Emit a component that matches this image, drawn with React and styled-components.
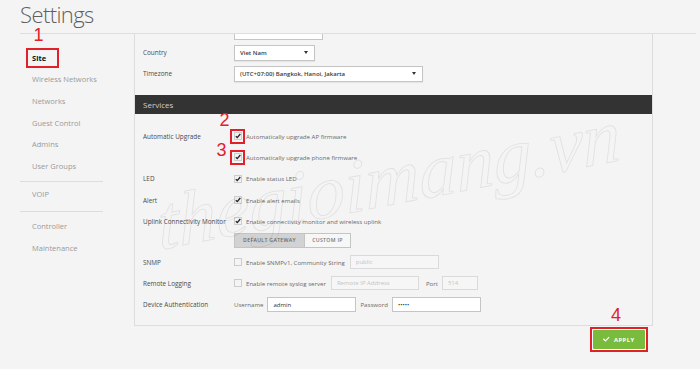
import React from "react";
import styled, { createGlobalStyle } from "styled-components";
import { FaCheck } from "react-icons/fa";

const Global = createGlobalStyle`
  html, body { margin: 0; padding: 0; background: #f4f4f4; }
  body { font-family: "Open Sans", "Liberation Sans", sans-serif; color: #555; }
  * { box-sizing: border-box; }
`;

const RED = "#e2202a";

const Page = styled.div`
  position: relative;
  width: 700px;
  height: 369px;
  overflow: hidden;
  padding: 0 4px 0 20px;
`;

const Title = styled.h1`
  margin: 0;
  height: 34px;
  border-bottom: 1px solid #dedede;
  font-size: 22px;
  font-weight: 300;
  letter-spacing: -0.6px;
  line-height: 28px;
  color: #5f5f5f;
`;

const Body = styled.div`
  display: grid;
  grid-template-columns: 114px 519px;
  align-items: start;
`;

const Sidebar = styled.nav`
  display: flex;
  flex-direction: column;
  padding-top: 13px;
`;

const NavItem = styled.div`
  height: 21.6px;
  display: flex;
  align-items: center;
  padding-left: 12px;
  font-size: 7.5px;
  color: ${(p) => (p.$active ? "#111" : "#9a9a9a")};
  font-weight: ${(p) => (p.$active ? 700 : 400)};
`;

const Separator = styled.div`
  width: 83px;
  height: 1px;
  background: #dcdcdc;
  margin: ${(p) => p.$m};
`;

const Mark = styled.span`
  position: relative;
  display: inline-flex;
  align-items: center;
  height: 20px;
  margin-left: -6px;
  padding: 0 11px 0 4px;
  border: 2px solid ${RED};
`;

const Badge = styled.span`
  position: absolute;
  left: ${(p) => p.$x}px;
  top: ${(p) => p.$y}px;
  font-family: "Liberation Sans", Arial, sans-serif;
  font-size: 18px;
  line-height: 1;
  font-weight: 400;
  color: ${RED};
`;

const Panel = styled.section`
  height: 292px;
  overflow: hidden;
  border: 1px solid #dcdcdc;
  border-top: none;
`;

const Form = styled.div`
  margin-top: -13px;
  display: flex;
  flex-direction: column;
`;

const Row = styled.div`
  display: grid;
  grid-template-columns: 91px 1fr;
  align-items: center;
  height: ${(p) => p.$h || 21.3}px;
  padding-left: 8px;
`;

const Label = styled.div`
  font-size: 6.4px;
  color: #4a4a4a;
  white-space: nowrap;
`;

const Controls = styled.div`
  display: flex;
  align-items: center;
  gap: ${(p) => p.$gap ?? 4}px;
  font-size: 6.1px;
  color: #6a6a6a;
  white-space: nowrap;
`;

const SectionBar = styled.div`
  height: 19px;
  margin: 11px 0 11.5px;
  background: #333;
  color: #cfcfcf;
  font-size: 8px;
  display: flex;
  align-items: center;
  padding-left: 8px;
`;

const Select = styled.div`
  width: ${(p) => p.$w}px;
  height: 16px;
  background: #fff;
  border: 1px solid #c5c5c5;
  box-shadow: 0 1px 1px rgba(0, 0, 0, 0.06);
  padding: 0 6px 0 5px;
  display: flex;
  align-items: center;
  justify-content: space-between;
  font-size: 6px;
  font-weight: 600;
  color: #3a3a3a;
`;

const Caret = () => (
  <svg width="4" height="3" viewBox="0 0 4 3">
    <path d="M0 0 H4 L2 3 Z" fill="#333" />
  </svg>
);

const TextInput = styled.input`
  width: ${(p) => p.$w}px;
  height: ${(p) => p.$h || 14}px;
  margin: 0 0 0 ${(p) => p.$ml || 0}px;
  padding: 0 5px;
  font-family: inherit;
  font-size: 6px;
  color: #333;
  background: ${(p) => (p.disabled ? "#f6f6f6" : "#fff")};
  border: 1px solid ${(p) => (p.disabled ? "#dadada" : "#c5c5c5")};
  border-radius: 0;
  outline: none;
  &::placeholder { color: #c4c4c4; }
`;

const InlineText = styled.span`
  margin: 0 4px 0 7px;
`;

const CheckSlot = styled.span`
  position: relative;
  width: 15px;
  height: 15px;
  margin-left: -4px;
  margin-right: 1px;
  display: inline-flex;
  align-items: center;
  justify-content: center;
  border: 2px solid ${(p) => (p.$marked ? RED : "transparent")};
`;

const Box = ({ checked }) => (
  <svg width="8" height="8" viewBox="0 0 8 8">
    <rect x="0.5" y="0.5" width="7" height="7" fill={checked ? "#f2f2f2" : "#f4f4f4"} stroke="#cdcdcd" />
    {checked && <path d="M1.8 4.2 L3.3 5.6 L6.3 2" fill="none" stroke="#2a2a2a" strokeWidth="1.4" />}
  </svg>
);

const Check = ({ checked, marked, badge }) => (
  <CheckSlot $marked={marked}>
    <Box checked={checked} />
    {badge}
  </CheckSlot>
);

const TabGroup = styled.div`
  display: flex;
  border: 1px solid #c4c4c4;
  margin: 1px 0 4.5px;
`;

const Tab = styled.div`
  width: ${(p) => p.$w}px;
  height: 13px;
  display: flex;
  align-items: center;
  justify-content: center;
  font-size: 5.2px;
  font-weight: 600;
  letter-spacing: 0.3px;
  text-transform: uppercase;
  color: ${(p) => (p.$active ? "#6a6a6a" : "#777")};
  background: ${(p) => (p.$active ? "#d2d2d2" : "#f7f7f7")};
  & + & { border-left: 1px solid #c4c4c4; }
`;

const Actions = styled.div`
  display: flex;
  justify-content: flex-end;
  padding: 1px 5px 0 0;
`;

const ApplyMark = styled.div`
  position: relative;
  border: 2px solid ${RED};
  padding: 1px;
  background: #fff;
`;

const ApplyButton = styled.button`
  width: 52px;
  height: 19px;
  border: none;
  border-radius: 1px;
  background: #79bc3d;
  color: #fff;
  font-family: inherit;
  font-size: 5.8px;
  font-weight: 700;
  letter-spacing: 0.5px;
  display: flex;
  align-items: center;
  justify-content: center;
  gap: 4px;
  padding: 0;
`;

const Watermark = styled.div`
  position: absolute;
  left: 160px;
  top: 186px;
  font-family: "Liberation Serif", serif;
  font-style: italic;
  font-weight: 400;
  font-size: 76px;
  line-height: 1;
  color: transparent;
  -webkit-text-stroke: 1px rgba(0, 0, 0, 0.075);
  transform: rotate(-11deg) skewX(-8deg);
  transform-origin: left bottom;
  pointer-events: none;
  white-space: nowrap;
`;

export default function App() {
  return (
    <Page>
      <Global />
      <Title>Settings</Title>
      <Body>
        <Sidebar>
          <NavItem $active>
            <Mark>
              Site
              <Badge $x={5.5} $y={-24}>1</Badge>
            </Mark>
          </NavItem>
          <NavItem>Wireless Networks</NavItem>
          <NavItem>Networks</NavItem>
          <NavItem>Guest Control</NavItem>
          <NavItem>Admins</NavItem>
          <NavItem>User Groups</NavItem>
          <Separator $m="4px 0 1.5px" />
          <NavItem>VOIP</NavItem>
          <Separator $m="6.5px 0 3px" />
          <NavItem>Controller</NavItem>
          <NavItem>Maintenance</NavItem>
        </Sidebar>

        <div>
          <Panel>
            <Form>
              <Row $h={21}>
                <Label>Site Name</Label>
                <Controls>
                  <TextInput $w={89} $h={16} readOnly value="Default" />
                </Controls>
              </Row>
              <Row $h={21}>
                <Label>Country</Label>
                <Controls>
                  <Select $w={81}>Viet Nam <Caret /></Select>
                </Controls>
              </Row>
              <Row $h={21}>
                <Label>Timezone</Label>
                <Controls>
                  <Select $w={189}>(UTC+07:00) Bangkok, Hanoi, Jakarta <Caret /></Select>
                </Controls>
              </Row>

              <SectionBar>Services</SectionBar>

              <Row>
                <Label>Automatic Upgrade</Label>
                <Controls $gap={0}>
                  <Check checked marked badge={<Badge $x={-12.5} $y={-20}>2</Badge>} />
                  Automatically upgrade AP firmware
                </Controls>
              </Row>
              <Row>
                <Label />
                <Controls $gap={0}>
                  <Check checked marked badge={<Badge $x={-15.5} $y={-11}>3</Badge>} />
                  Automatically upgrade phone firmware
                </Controls>
              </Row>
              <Row>
                <Label>LED</Label>
                <Controls $gap={0}>
                  <Check checked />
                  Enable status LED
                </Controls>
              </Row>
              <Row>
                <Label>Alert</Label>
                <Controls $gap={0}>
                  <Check checked />
                  Enable alert emails
                </Controls>
              </Row>
              <Row>
                <Label>Uplink Connectivity Monitor</Label>
                <Controls $gap={0}>
                  <Check checked />
                  Enable connectivity monitor and wireless uplink
                </Controls>
              </Row>
              <Row $h={19.5}>
                <Label />
                <Controls>
                  <TabGroup>
                    <Tab $w={69} $active>Default Gateway</Tab>
                    <Tab $w={46}>Custom IP</Tab>
                  </TabGroup>
                </Controls>
              </Row>
              <Row>
                <Label>SNMP</Label>
                <Controls $gap={0}>
                  <Check />
                  Enable SNMPv1, Community String
                  <TextInput $w={89} $ml={5} disabled placeholder="public" />
                </Controls>
              </Row>
              <Row>
                <Label>Remote Logging</Label>
                <Controls $gap={0}>
                  <Check />
                  Enable remote syslog server
                  <TextInput $w={88} $ml={5} disabled placeholder="Remote IP Address" />
                  <InlineText>Port</InlineText>
                  <TextInput $w={36} disabled placeholder="514" />
                </Controls>
              </Row>
              <Row>
                <Label>Device Authentication</Label>
                <Controls>
                  Username
                  <TextInput $w={89} $h={15} readOnly value="admin" />
                  Password
                  <TextInput $w={89} $h={15} type="password" readOnly value="admin" />
                </Controls>
              </Row>
            </Form>
          </Panel>
          <Actions>
            <ApplyMark>
              <Badge $x={19} $y={-23}>4</Badge>
              <ApplyButton>
                <FaCheck size={6.5} />
                APPLY
              </ApplyButton>
            </ApplyMark>
          </Actions>
        </div>
      </Body>
      <Watermark>thegioimang.vn</Watermark>
    </Page>
  );
}
